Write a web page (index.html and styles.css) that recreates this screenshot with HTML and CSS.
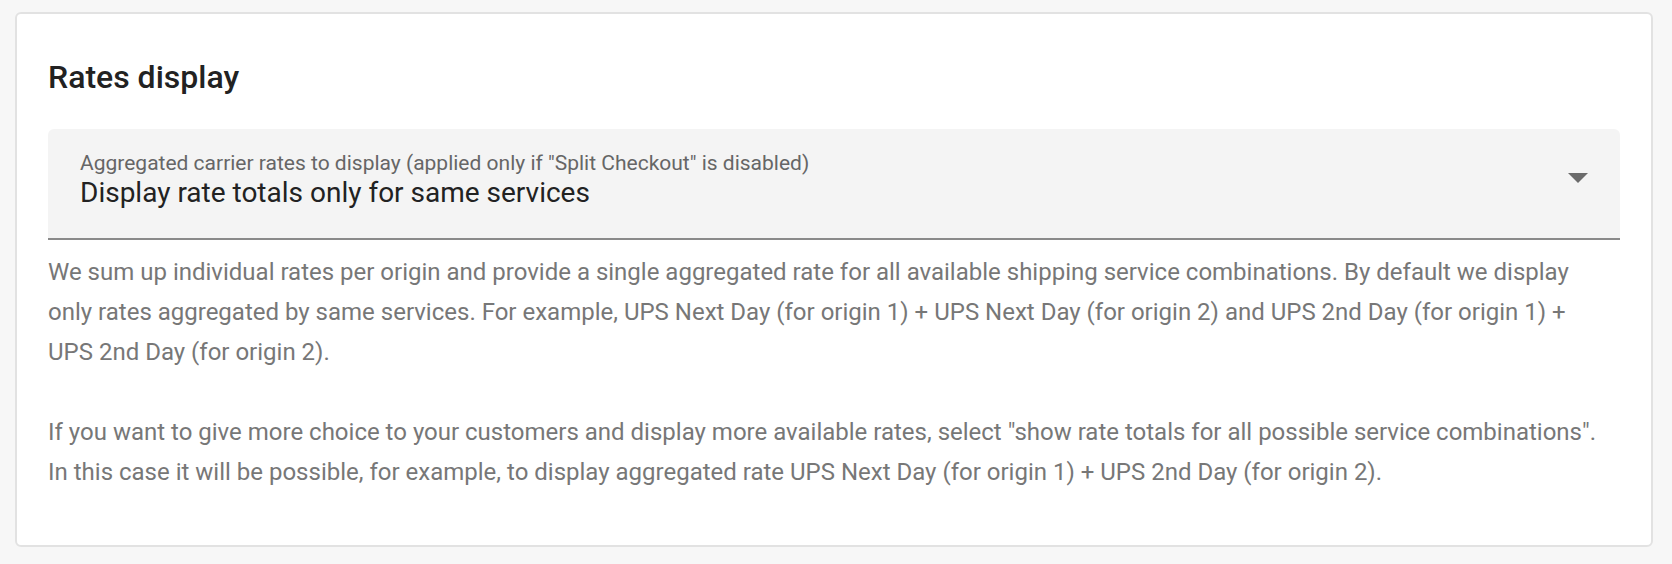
FILE: index.html
```html
<!DOCTYPE html>
<html lang="en">
<head>
<meta charset="utf-8">
<title>Rates display</title>
<link rel="stylesheet" href="styles.css">
</head>
<body>
<section class="card">
  <h2 class="title">Rates display</h2>
  <div class="select">
    <div class="select-text">
      <div class="select-label">Aggregated carrier rates to display (applied only if "Split Checkout" is disabled)</div>
      <div class="select-value">Display rate totals only for same services</div>
    </div>
    <svg class="arrow" width="20" height="10" viewBox="0 0 20 10"><path d="M0 0 L20 0 L10 10 Z" fill="#6b6b6b"/></svg>
  </div>
  <div class="help">
    <p>We sum up individual rates per origin and provide a single aggregated rate for all available shipping service combinations. By default we display only rates aggregated by same services. For example, UPS Next Day (for origin 1) + UPS Next Day (for origin 2) and UPS 2nd Day (for origin 1) + UPS 2nd Day (for origin 2).</p>
    <p>If you want to give more choice to your customers and display more available rates, select "show rate totals for all possible service combinations". In this case it will be possible, for example, to display aggregated rate UPS Next Day (for origin 1) + UPS 2nd Day (for origin 2).</p>
  </div>
</section>
</body>
</html>
```

FILE: styles.css
```css
html, body {
  margin: 0;
  padding: 0;
  background: #f7f7f7;
  font-family: Roboto, "Liberation Sans", Arial, sans-serif;
}

body {
  padding: 12px 19px 0 15px;
}

.card {
  background: #ffffff;
  border: 2px solid #e2e2e2;
  border-radius: 6px;
  padding: 30px 31px 30px 31px;
}

.title {
  margin: 13px 0 32px 0;
  font-size: 32px;
  line-height: 40px;
  font-weight: 500;
  color: #222222;
}

.select {
  display: flex;
  align-items: flex-start;
  background: #f4f4f4;
  border-radius: 6px 6px 0 0;
  border-bottom: 2px solid #8a8a8a;
  height: 109px;
  box-sizing: content-box;
  padding: 0 32px 0 32px;
}

.select-text {
  flex: 1;
  padding-top: 22px;
}

.select-label {
  font-size: 21px;
  line-height: 24px;
  color: #666666;
}

.select-value {
  margin-top: 2px;
  font-size: 28px;
  line-height: 32px;
  color: #222222;
}

.arrow {
  display: block;
  margin-top: 44px;
}

.help {
  margin: 12px 5px 0 0;
  color: #777777;
  font-size: 24px;
  line-height: 40px;
}

.help p {
  margin: 0 0 40px 0;
}

.help p:last-child {
  margin-bottom: 23px;
}
```
